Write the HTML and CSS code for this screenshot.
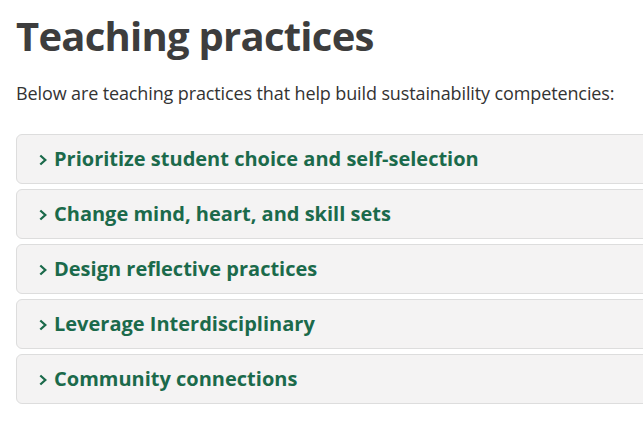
FILE: index.html
```html
<!DOCTYPE html>
<html lang="en">

<head>
 <meta charset="UTF-8">
 <meta name="viewport" content="width=device-width, initial-scale=1.0">
 <link rel="stylesheet" href="styles.css">
 <title>Teaching practices</title>
</head>

<body>
 <div class="container">
  <h1>Teaching practices</h1>
  <p class="intro">Below are teaching practices that help build sustainability competencies:</p>
  <div class="accordion">
   <div class="panel">
    <svg class="chevron" viewBox="0 0 8 12"><polyline points="1.3,1.5 6.3,6 1.3,10.5" /></svg>
    Prioritize student choice and self-selection
   </div>
   <div class="panel">
    <svg class="chevron" viewBox="0 0 8 12"><polyline points="1.3,1.5 6.3,6 1.3,10.5" /></svg>
    Change mind, heart, and skill sets
   </div>
   <div class="panel">
    <svg class="chevron" viewBox="0 0 8 12"><polyline points="1.3,1.5 6.3,6 1.3,10.5" /></svg>
    Design reflective practices
   </div>
   <div class="panel">
    <svg class="chevron" viewBox="0 0 8 12"><polyline points="1.3,1.5 6.3,6 1.3,10.5" /></svg>
    Leverage Interdisciplinary
   </div>
   <div class="panel">
    <svg class="chevron" viewBox="0 0 8 12"><polyline points="1.3,1.5 6.3,6 1.3,10.5" /></svg>
    Community connections
   </div>
  </div>
 </div>
</body>

</html>
```

FILE: styles.css
```css
/* Reset some default styles for browsers */
body,
h1,
p {
 margin: 0;
 padding: 0;
}

body {
 background-color: #FFF;
 color: #333;
 font-family: "Open Sans", Arial, sans-serif;
 overflow: hidden;
}

.container {
 width: 800px;
 padding: 0 16px;
}

h1 {
 font-size: 40px;
 font-weight: 700;
 color: #3d3d3d;
 line-height: 48px;
 letter-spacing: -0.75px;
 margin-top: 12px;
 margin-bottom: 21px;
}

.intro {
 font-size: 18px;
 line-height: 25px;
 letter-spacing: -0.12px;
 color: #333;
 margin-bottom: 28px;
}

.accordion {
 display: flex;
 flex-direction: column;
 gap: 5px;
}

.panel {
 height: 46px;
 padding-bottom: 2px;
 display: flex;
 align-items: center;
 padding-left: 22px;
 background-color: #F4F3F3;
 border: 1px solid #DDD;
 border-radius: 6px;
 font-size: 20px;
 font-weight: 700;
 color: #1B6A4B;
}

.chevron {
 width: 8px;
 height: 12px;
 margin-top: 3px;
 margin-right: 7px;
 fill: none;
 stroke: currentColor;
 stroke-width: 2.3;
}
```
